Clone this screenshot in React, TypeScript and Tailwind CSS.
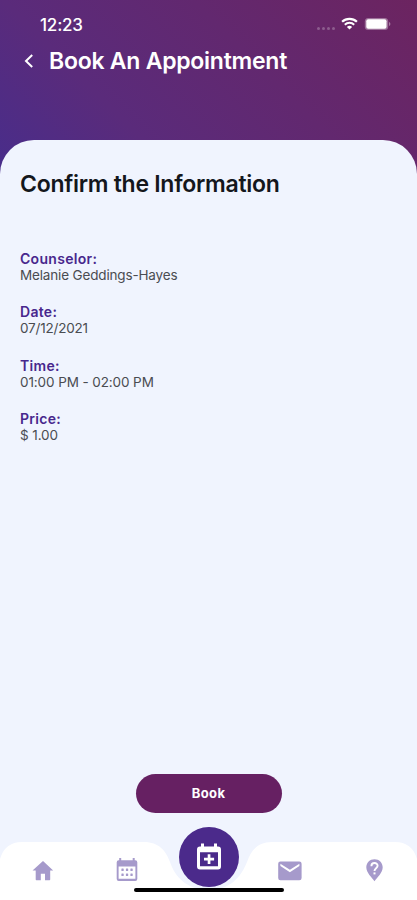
import React from "react";

const details = [
  { label: "Counselor:", value: "Melanie Geddings-Hayes", spacing: "tracking-[-0.16px]" },
  { label: "Date:", value: "07/12/2021", spacing: "tracking-[-0.2px]" },
  { label: "Time:", value: "01:00 PM - 02:00 PM", spacing: "tracking-[-0.1px]" },
  { label: "Price:", value: "$ 1.00", spacing: "tracking-[-0.1px]" },
];

function StatusBar() {
  return (
    <div className="flex h-[46px] items-start justify-between pl-10 pr-[26px] pt-[14px] text-white">
      <span className="text-[17px] font-medium leading-[22px] tracking-[-0.2px]">12:23</span>
      <div className="flex items-center pt-[3px]">
        <div className="mr-[6px] mt-[9px] flex gap-[2px]">
          {[0, 1, 2, 3].map((dot) => (
            <span key={dot} className="size-[3px] rounded-full bg-white/25" />
          ))}
        </div>
        <svg width="17" height="14" viewBox="0 0 17 14" fill="none" stroke="white" className="mr-[6px]">
          <path d="M1.1 4.8C5.2.9 11.8.9 15.9 4.8" strokeWidth="2.2" />
          <path d="M3.8 7.7C6.4 5.2 10.6 5.2 13.2 7.7" strokeWidth="2" />
          <path d="M5.9 9.9C7.4 8.5 9.6 8.5 11.1 9.9L8.5 12.6Z" fill="white" stroke="none" />
        </svg>
        <svg width="27" height="14" viewBox="0 0 27 14">
          <rect x=".8" y="1" width="23.4" height="12" rx="3.5" fill="white" fillOpacity=".35" />
          <rect x="2.3" y="2.3" width="20.2" height="9.4" rx="2" fill="white" />
          <path d="M25.2 5v4c1.5-.6 1.5-3.4 0-4" fill="white" fillOpacity=".5" />
        </svg>
      </div>
    </div>
  );
}

function HomeIcon() {
  return (
    <svg width="22" height="20" viewBox="0 0 22 20" fill="currentColor">
      <path d="M11 0 21.2 9.4H18.2V18.5Q18.2 19.2 17.5 19.2H13V12.7H8.8V19.2H4.4Q3.7 19.2 3.7 18.5V9.4H.5Z" />
    </svg>
  );
}

function CalendarIcon() {
  return (
    <svg width="22" height="24" viewBox="0 0 22 24" fill="currentColor">
      <path fillRule="evenodd" d="M3.2 0h2v2.3h11.5V0h2v2.3h.6q2 0 2 2V21q0 2-2 2H2.7q-2 0-2-2V4.3q0-2 2-2h.5ZM2.6 8.4V20.8h16.8V8.4Z" />
      {[5.4, 9.9, 14.4].map((x) =>
        [10.6, 15.6].map((y) => <rect key={`${x}-${y}`} x={x} y={y} width="2.3" height="2.3" rx=".5" />),
      )}
    </svg>
  );
}

function MailIcon() {
  return (
    <svg width="24" height="20" viewBox="0 0 24 20" fill="currentColor">
      <path fillRule="evenodd" d="M2.4.4h18.9q2.3 0 2.3 2.3v14.2q0 2.3-2.3 2.3H2.4Q.2 19.2.2 16.9V2.7Q.2.4 2.4.4Zm0 2.4v2.3l9.5 6.2 9.5-6.2V2.8l-9.5 6Z" />
    </svg>
  );
}

function HelpPinIcon() {
  return (
    <svg width="17" height="23" viewBox="0 0 17 23">
      <path d="M8.5.2C3.8.2.3 3.7.3 8.3c0 5.4 5.5 10.3 8.2 14 2.7-3.7 8.2-8.6 8.2-14C16.7 3.7 13.2.2 8.5.2Z" fill="currentColor" />
      <path d="M5.4 7.2c0-4.2 6.2-4.1 6.2-.4 0 2.4-3.1 2.5-3.1 5.1" fill="none" stroke="white" strokeWidth="1.9" />
      <rect x="7.5" y="13.4" width="2" height="2" fill="white" />
    </svg>
  );
}

function BottomNav() {
  return (
    <nav className="relative h-[74px] text-[#a69acb]">
      <svg className="absolute left-0 top-4" width="417" height="58" viewBox="0 0 417 58">
        <path
          fill="white"
          d="M0 17Q5 0 22 0H144C159 0 166 9 170 20C175 35 187 48 209 48C230 48 241 35 247 20C251 9 257 0 272 0H395Q412 0 417 17V58H0Z"
        />
      </svg>
      <div className="relative grid h-full grid-cols-[85px_84px_79px_84px_85px]">
        <button aria-label="Home" className="flex justify-center pt-[35px]"><HomeIcon /></button>
        <button aria-label="Calendar" className="flex justify-center pt-8"><CalendarIcon /></button>
        <button aria-label="New appointment" className="mt-[1px] flex size-[60px] items-center justify-center justify-self-center rounded-full bg-[#4b2a8b] text-white">
          <svg width="26" height="28" viewBox="0 0 26 28" fill="currentColor">
            <path fillRule="evenodd" d="M5 .5h3v3h10v-3h3v3h1q3 0 3 3v17q0 3-3 3H4q-3 0-3-3v-17q0-3 3-3h1ZM4 9.2v14.1h18V9.2Z" />
            <path d="M11.7 11.3h2.7v3.5h3.7v2.7h-3.7v3.6h-2.7v-3.6H8v-2.7h3.7Z" />
          </svg>
        </button>
        <button aria-label="Messages" className="flex justify-center pt-[35px]"><MailIcon /></button>
        <button aria-label="Help" className="flex justify-center pt-[33px]"><HelpPinIcon /></button>
      </div>
      <div className="absolute left-[134px] top-[62px] h-[4px] w-[150px] rounded-full bg-black" />
    </nav>
  );
}

export default function App() {
  return (
    <div className="flex h-[900px] w-[417px] flex-col overflow-hidden bg-[linear-gradient(45deg,#482d8b_0%,#5a2b7b_30%,#62286f_62%,#6c2460_100%)] bg-[length:417px_175px] font-['Inter',sans-serif]">
      <header className="h-[140px] shrink-0">
        <StatusBar />
        <div className="flex items-center pl-6 text-white">
          <svg className="mr-[15px]" width="10" height="16" viewBox="0 0 10 16" fill="none">
            <path d="M8.2 2 2 8l6.2 6" stroke="white" strokeWidth="2" />
          </svg>
          <h1 className="whitespace-nowrap text-[23px] font-semibold leading-[30px] tracking-[-0.25px]">Book An Appointment</h1>
        </div>
      </header>
      <div className="flex min-h-0 flex-1 flex-col rounded-t-[34px] bg-[#f0f4fe]">
        <main className="flex flex-1 flex-col px-5 pt-[29px]">
          <h2 className="text-[23px] font-semibold leading-[30px] tracking-[-0.28px] text-[#14171c]">Confirm the Information</h2>
          <dl className="mt-[51px] flex flex-col gap-[19.3px]">
            {details.map((item) => (
              <div key={item.label} className="text-[14px] leading-[17px]">
                <dt className="font-semibold tracking-[0.3px] text-[#48278d]">{item.label}</dt>
                <dd className={`text-[13.5px] text-[#4a4c51] ${item.spacing}`}>{item.value}</dd>
              </div>
            ))}
          </dl>
          <button className="mb-[13px] mt-auto h-[39px] w-[146px] self-center rounded-full bg-[#662062] text-[13px] font-bold tracking-[0.4px] text-white">Book</button>
        </main>
        <BottomNav />
      </div>
    </div>
  );
}
